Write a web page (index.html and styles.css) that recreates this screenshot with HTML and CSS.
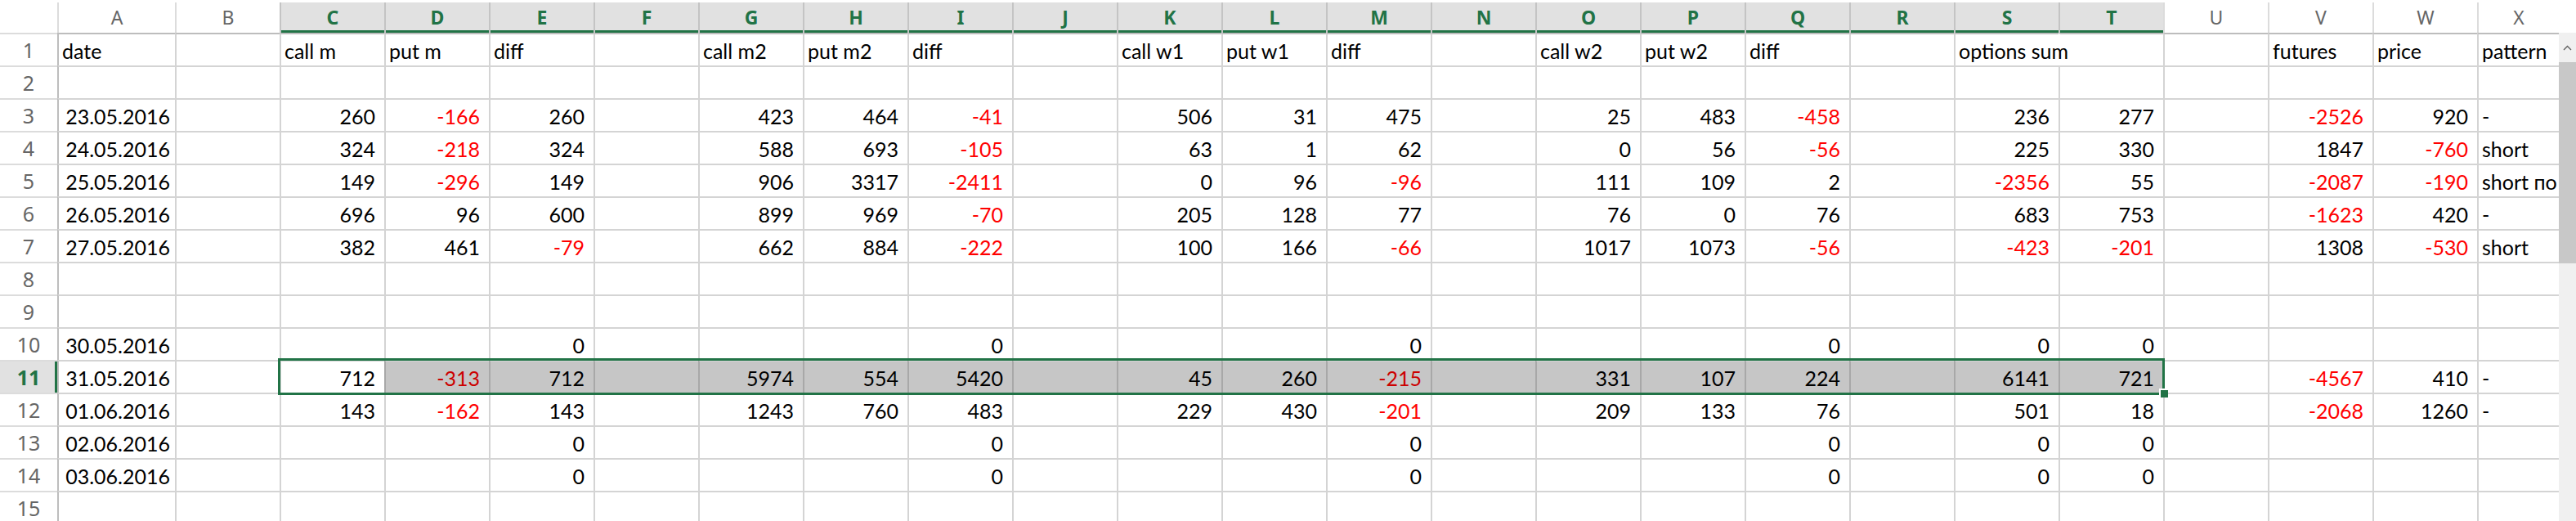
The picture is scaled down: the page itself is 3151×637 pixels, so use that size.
FILE: index.html
```html
<!DOCTYPE html>
<html>
    <head>
        <title>Book1 - Excel</title>
        <meta charset="utf-8">
        <link rel="stylesheet" href="styles.css">
    </head>
    <body>
        <div class="window">
            <div class="sheet" id="sheet">
                <div class="selection"></div>
                <div class="fill-handle"></div>
            </div>
            <div class="scrollbar">
                <div class="scroll-top"></div>
                <div class="scroll-up">
                    <svg width="11" height="7" viewBox="0 0 11 7"><polyline points="1,6 5.5,1.5 10,6" fill="none" stroke="#606060" stroke-width="1.4"/></svg>
                </div>
                <div class="scroll-thumb"></div>
                <div class="scroll-track"></div>
            </div>
        </div>
        <script>
            const cols = 'ABCDEFGHIJKLMNOPQRSTUVWX'.split('')

            const data = {
                1: ['date', '', 'call m', 'put m', 'diff', '', 'call m2', 'put m2', 'diff', '', 'call w1', 'put w1', 'diff', '', 'call w2', 'put w2', 'diff', '', 'options sum', '', '', 'futures', 'price', 'pattern'],
                3: ['23.05.2016', '', 260, -166, 260, '', 423, 464, -41, '', 506, 31, 475, '', 25, 483, -458, '', 236, 277, '', -2526, 920, '-'],
                4: ['24.05.2016', '', 324, -218, 324, '', 588, 693, -105, '', 63, 1, 62, '', 0, 56, -56, '', 225, 330, '', 1847, -760, 'short'],
                5: ['25.05.2016', '', 149, -296, 149, '', 906, 3317, -2411, '', 0, 96, -96, '', 111, 109, 2, '', -2356, 55, '', -2087, -190, 'short по'],
                6: ['26.05.2016', '', 696, 96, 600, '', 899, 969, -70, '', 205, 128, 77, '', 76, 0, 76, '', 683, 753, '', -1623, 420, '-'],
                7: ['27.05.2016', '', 382, 461, -79, '', 662, 884, -222, '', 100, 166, -66, '', 1017, 1073, -56, '', -423, -201, '', 1308, -530, 'short'],
                10: ['30.05.2016', '', '', '', 0, '', '', '', 0, '', '', '', 0, '', '', '', 0, '', 0, 0],
                11: ['31.05.2016', '', 712, -313, 712, '', 5974, 554, 5420, '', 45, 260, -215, '', 331, 107, 224, '', 6141, 721, '', -4567, 410, '-'],
                12: ['01.06.2016', '', 143, -162, 143, '', 1243, 760, 483, '', 229, 430, -201, '', 209, 133, 76, '', 501, 18, '', -2068, 1260, '-'],
                13: ['02.06.2016', '', '', '', 0, '', '', '', 0, '', '', '', 0, '', '', '', 0, '', 0, 0],
                14: ['03.06.2016', '', '', '', 0, '', '', '', 0, '', '', '', 0, '', '', '', 0, '', 0, 0]
            }

            const sheet = document.getElementById('sheet')

            function add(cls, text) {
                const el = document.createElement('div')
                el.className = cls
                el.textContent = text
                sheet.appendChild(el)
            }

            add('corner', '')
            cols.forEach(function (c, i) {
                add(i >= 2 && i <= 19 ? 'colhead sel' : 'colhead', c)
            })

            for (let r = 1; r <= 15; r++) {
                add(r === 11 ? 'rowhead sel' : 'rowhead', r)
                const row = data[r] || []
                cols.forEach(function (c, i) {
                    const v = row[i] === undefined ? '' : row[i]
                    let cls = 'cell'
                    if (typeof v === 'number') cls += v < 0 ? ' num neg' : ' num'
                    else if (/^\d\d\.\d\d\.\d{4}$/.test(v)) cls += ' date'
                    if (i === 0) cls += ' first'
                    if (r === 1) cls += ' top'
                    if (r === 11 && i >= 3 && i <= 19) cls += ' sel'
                    if (r === 1 && c === 'T') cls += ' spill'
                    add(cls, v)
                })
            }
        </script>
    </body>
</html>
```

FILE: styles.css
```css
body {
    margin: 0;
    background-color: #fff;
    overflow: hidden;
    font-family: Lato, "Liberation Sans", sans-serif;
}

.window {
    display: flex;
    height: 637px;
    overflow: hidden;
}

.sheet {
    position: relative;
    flex: none;
    width: 3130px;
    padding-top: 3px;
    display: grid;
    grid-template-columns: 70px 144px repeat(22, 128px) 100px;
    grid-template-rows: 37px;
    grid-auto-rows: 40px;
    overflow: hidden;
}

.colhead {
    border-left: 2px solid #dcdcdc;
    font-family: "Noto Sans", sans-serif;
    font-size: 23px;
    line-height: 37px;
    color: #666;
    text-align: center;
}

.colhead.sel {
    background-color: #e1e1e1;
    border-left-color: #c4c4c4;
    color: #217346;
    font-weight: bold;
    box-shadow: inset 0 -3px #217346;
}

.rowhead {
    border-top: 2px solid #dcdcdc;
    font-family: "Noto Sans", sans-serif;
    font-size: 25px;
    line-height: 38px;
    color: #666;
    text-align: center;
}

.rowhead.sel {
    background-color: #e1e1e1;
    color: #217346;
    font-weight: bold;
    box-shadow: inset -3px 0 #217346;
}

.cell {
    border-left: 2px solid #d4d4d4;
    border-top: 2px solid #d4d4d4;
    padding: 5px 4px 0 4px;
    font-size: 25px;
    line-height: 30px;
    color: #000;
    white-space: nowrap;
}

.cell.num {
    text-align: right;
    padding-right: 11px;
}

.cell.date {
    text-align: right;
    padding-right: 6px;
}

.cell.neg {
    color: #ff0000;
}

.cell.first {
    border-left-color: #bdbdbd;
}

.cell.top {
    border-top-color: #bdbdbd;
}

.cell.spill {
    border-left-color: transparent;
}

.cell.sel {
    background-color: #c6c6c6;
    border-left-color: #a8a8a8;
}

.cell.sel.neg {
    color: #cc0000;
}

.selection {
    position: absolute;
    left: 340px;
    top: 438px;
    width: 2308px;
    height: 45px;
    box-sizing: border-box;
    border: 3px solid #217346;
}

.fill-handle {
    position: absolute;
    left: 2641px;
    top: 475px;
    width: 9px;
    height: 9px;
    background-color: #217346;
    border-left: 2px solid #fff;
    border-top: 2px solid #fff;
}

.scrollbar {
    flex: none;
    width: 21px;
    display: flex;
    flex-direction: column;
}

.scroll-top {
    height: 40px;
}

.scroll-up {
    height: 36px;
    background-color: #f0f0f0;
    display: flex;
    justify-content: center;
    align-items: center;
}

.scroll-thumb {
    height: 246px;
    background-color: #c8c8c8;
}

.scroll-track {
    flex: 1;
    background-color: #f0f0f0;
}
```
